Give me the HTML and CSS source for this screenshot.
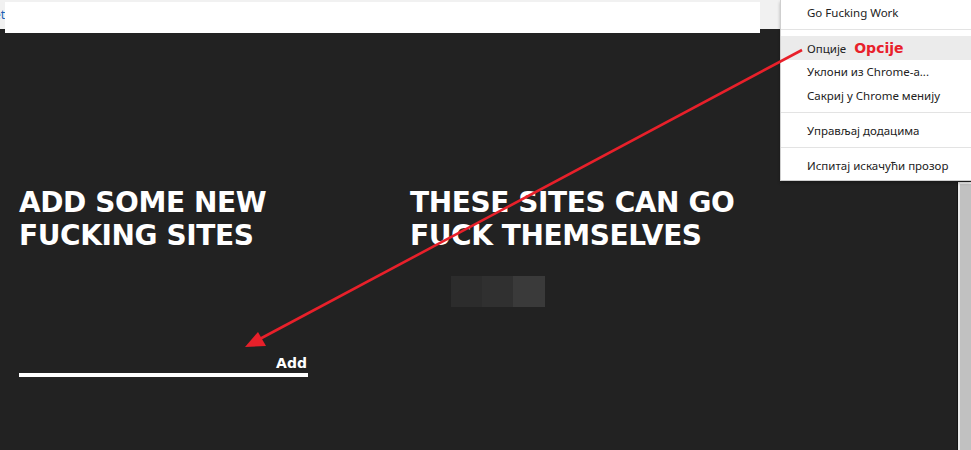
FILE: index.html
```html
<!DOCTYPE html>
<html lang="sr">
<head>
  <meta charset="UTF-8">
  <title>Go Fucking Work</title>
  <link rel="stylesheet" href="styles.css">
</head>
<body>
  <!-- browser chrome strip -->
  <div class="chrome">
    <span class="chrome-url"><span>et</span></span>
    <div class="chrome-box"></div>
  </div>

  <div class="page">
    <section class="col">
      <h1 class="col-title">ADD SOME NEW<br>FUCKING SITES</h1>
      <form class="add-form">
        <input class="add-input" type="text">
        <button class="add-btn" type="button">Add</button>
      </form>
    </section>
    <section class="col">
      <h1 class="col-title">THESE SITES CAN GO<br>FUCK THEMSELVES</h1>
      <div class="site-list">
        <div class="site-cell c1"></div>
        <div class="site-cell c2"></div>
        <div class="site-cell c3"></div>
      </div>
    </section>
  </div>

  <!-- extension context menu -->
  <div class="ctx-menu">
    <div class="ctx-item">Go Fucking Work</div>
    <div class="ctx-sep"></div>
    <div class="ctx-item active">Опције <span class="note">Opcije</span></div>
    <div class="ctx-item">Уклони из Chrome-а...</div>
    <div class="ctx-item">Сакриј у Chrome менију</div>
    <div class="ctx-sep"></div>
    <div class="ctx-item">Управљај додацима</div>
    <div class="ctx-sep"></div>
    <div class="ctx-item">Испитај искачући прозор</div>
  </div>

  <div class="scrollbar"></div>

  <!-- red annotation arrow -->
  <svg class="arrow" width="971" height="450" viewBox="0 0 971 450">
    <line x1="802" y1="50" x2="256" y2="341" stroke="#e8202a" stroke-width="2.6"/>
    <polygon points="245,347 258,332 266,346" fill="#e8202a"/>
  </svg>
</body>
</html>
```

FILE: styles.css
```css
/* global */
body {
  margin: 0;
  padding: 0;
  height: 450px;
  overflow: hidden;
  position: relative;
  background-color: #222222;
  font-family: "DejaVu Sans", sans-serif;
  color: #ffffff;
}

/* browser chrome strip */
.chrome {
  width: 780px;
  height: 29px;
  background-color: #f1f1f1;
  display: flex;
  align-items: flex-start;
}

.chrome-url {
  width: 5px;
  height: 29px;
  overflow: hidden;
  display: flex;
  justify-content: flex-end;
  align-items: center;
  font-family: "Noto Sans", sans-serif;
  font-size: 12px;
  color: #1a5fb4;
}

.chrome-box {
  margin-top: 2px;
  width: 755px;
  height: 31px;
  background-color: #ffffff;
  position: relative;
  z-index: 1;
}

/* page content */
.page {
  display: flex;
  padding: 157px 0 0 19px;
}

.col {
  width: 391px;
}

.col-title {
  margin: 0;
  font-size: 28px;
  line-height: 33px;
  font-weight: bold;
  letter-spacing: -0.4px;
}

/* add form */
.add-form {
  margin-top: 97px;
  width: 289px;
  height: 24px;
  display: flex;
  align-items: flex-end;
  border-bottom: 4px solid #ffffff;
}

.add-input {
  flex: 1;
  min-width: 0;
  height: 24px;
  padding: 0;
  border: none;
  outline: none;
  background: transparent;
}

.add-btn {
  padding: 0 1px 2px 0;
  border: none;
  background: transparent;
  color: #ffffff;
  font-family: "DejaVu Sans", sans-serif;
  font-size: 14px;
  line-height: 16px;
  font-weight: bold;
}

/* blocked sites */
.site-list {
  display: flex;
  margin: 24px 0 0 41px;
}

.site-cell {
  width: 31px;
  height: 31px;
}

.c1 { background-color: #2c2c2c; }
.c2 { background-color: #303030; }
.c3 { background-color: #3a3a3a; width: 32px; }

/* context menu */
.ctx-menu {
  position: absolute;
  top: 0;
  right: 0;
  width: 190px;
  padding: 1px 0 2px;
  background-color: #ffffff;
  border-left: 1px solid #cfcfcf;
  border-bottom: 1px solid #cfcfcf;
  box-shadow: 0 2px 3px rgba(0, 0, 0, 0.25);
  font-family: "Noto Sans", sans-serif;
  font-size: 11.5px;
  color: #222222;
  z-index: 2;
}

.ctx-item {
  height: 24px;
  line-height: 24px;
  padding-left: 26px;
  white-space: nowrap;
}

.ctx-item.active {
  background-color: #ebebeb;
}

.ctx-sep {
  height: 1px;
  margin: 4px 0 6px;
  background-color: #e3e3e3;
}

.note {
  margin-left: 5px;
  color: #e8202a;
  font-family: "DejaVu Sans", sans-serif;
  font-size: 14px;
  font-weight: bold;
}

/* window scrollbar */
.scrollbar {
  position: absolute;
  top: 182px;
  right: 0;
  bottom: 0;
  width: 11px;
  background-color: #c1c1c1;
  border-top: 2px solid #ececec;
  border-left: 2px solid #ececec;
  box-shadow: -1px 0 0 #151515;
}

.arrow {
  position: absolute;
  top: 0;
  left: 0;
  pointer-events: none;
  z-index: 3;
}
```
